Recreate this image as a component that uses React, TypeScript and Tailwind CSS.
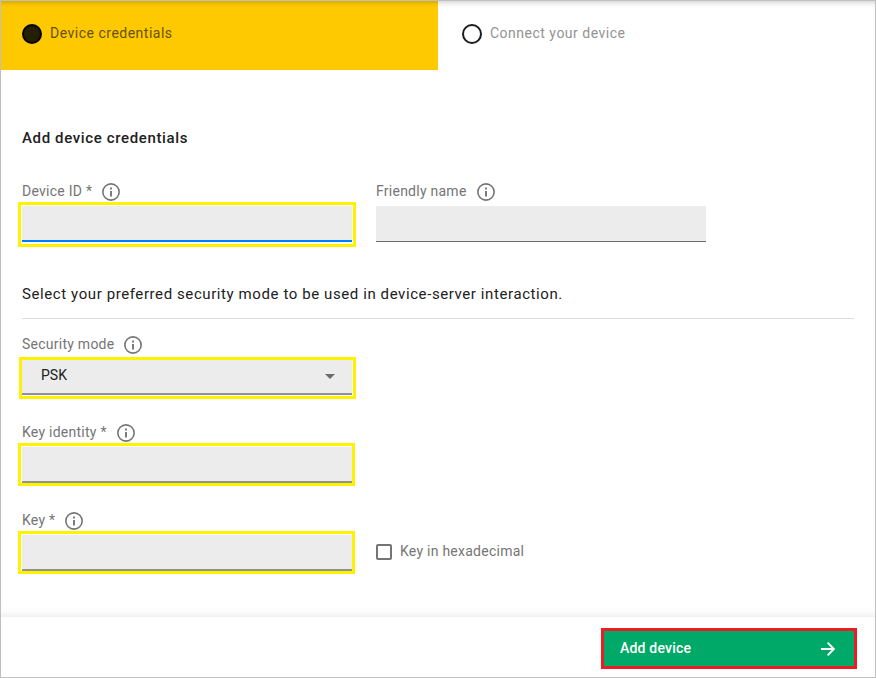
import type { ReactNode } from "react";

function InfoIcon() {
  return (
    <svg width="18" height="18" viewBox="0 0 18 18" className="shrink-0" fill="none">
      <circle cx="9" cy="9" r="8.15" stroke="#757575" strokeWidth="1.6" />
      <path d="M8.1 4.6h1.8v1.8H8.1zM8.1 8h1.8v5.5H8.1z" fill="#6e6e6e" />
    </svg>
  );
}

function Label({ children }: { children: ReactNode }) {
  return (
    <div className="flex h-[18px] items-start gap-[10px] text-sm leading-4 tracking-[0.25px] text-[#757575]">
      <span className="whitespace-nowrap">{children}</span>
      <InfoIcon />
    </div>
  );
}

export default function App() {
  return (
    <div className="flex h-[678px] w-[876px] flex-col overflow-hidden border border-[#c0c0c0] bg-white font-['Roboto',sans-serif]">
      <header className="flex h-[69px] shrink-0 bg-[linear-gradient(to_bottom,rgba(0,0,0,0.14),rgba(0,0,0,0.03)_4px,transparent_7px)] text-sm leading-[18px] tracking-[0.5px]">
        <div className="flex w-[437px] gap-2 bg-[#ffc900] bg-[linear-gradient(to_bottom,rgba(0,0,0,0.14),rgba(0,0,0,0.03)_4px,transparent_7px)] pt-[23px] pl-[21px] text-[#66510a]">
          <span className="size-5 rounded-full border-2 border-black bg-[#261e00]" />
          <span>Device credentials</span>
        </div>
        <div className="flex gap-2 pt-[23px] pl-6 text-[#939393]">
          <span className="size-5 rounded-full border-2 border-[#1c1c1c]" />
          <span>Connect your device</span>
        </div>
      </header>

      <main className="flex min-h-0 flex-1 flex-col pr-[21px] pl-[21px]">
        <h1 className="mt-[58px] h-5 text-[15px] leading-5 font-medium tracking-[0.63px] text-[#212121]">
          Add device credentials
        </h1>

        <div className="mt-[35px] flex h-[64px]">
          <div className="w-[354px]">
            <Label>Device ID *</Label>
            <div className="mt-[1px] -ml-1 h-[45px] w-[338px] border-[3px] border-[#fff200] px-[1px] pt-[1px]">
              <div className="h-9 border-b-2 border-[#007bff] bg-[#ececec]" />
            </div>
          </div>
          <div>
            <Label>Friendly name</Label>
            <div className="mt-[5px] h-9 w-[330px] border-b border-[#6e6e6e] bg-[#ececec]" />
          </div>
        </div>

        <p className="mt-[37px] h-5 text-[15px] leading-5 tracking-[0.59px] text-[#212121]">
          Select your preferred security mode to be used in device-server interaction.
        </p>
        <div className="mt-[14px] h-px shrink-0 bg-[#dedede]" />

        <div className="mt-[17px] h-[63px]">
          <Label>Security mode</Label>
          <div className="mt-[3px] -ml-[3px] h-[42px] w-[337px] border-[3px] border-[#fff200] pr-[1px]">
            <div className="flex h-[35px] items-center justify-between border-b-2 border-[#929292] bg-[#ececec] pr-[17px] pb-1 pl-[19px] text-sm text-[#212121]">
              <span>PSK</span>
              <svg width="10" height="5" viewBox="0 0 10 5" className="mt-[3px]">
                <path d="M0 0h10L5 5z" fill="#6b6b6b" />
              </svg>
            </div>
          </div>
        </div>

        <div className="mt-[25px] h-[62px]">
          <Label>Key identity *</Label>
          <div className="mt-[1px] -ml-1 h-[43px] w-[337px] border-[3px] border-[#fff200] pt-[1px] pl-[1px]">
            <div className="h-9 w-[330px] border-b-2 border-[#929292] bg-[#ececec]" />
          </div>
        </div>

        <div className="mt-[26px] flex h-[62px]">
          <div className="w-[354px]">
            <Label>Key *</Label>
            <div className="mt-[1px] -ml-1 h-[43px] w-[337px] border-[3px] border-[#fff200] pt-[1px] pl-[1px]">
              <div className="h-9 w-[330px] border-b-2 border-[#929292] bg-[#ececec]" />
            </div>
          </div>
          <div className="flex gap-2 pt-8 text-sm leading-[14px] tracking-[0.25px] text-[#757575]">
            <span className="size-4 shrink-0 rounded-[2px] border-2 border-[#757575]" />
            <span className="whitespace-nowrap">Key in hexadecimal</span>
          </div>
        </div>
      </main>

      <div className="h-3 shrink-0 bg-linear-to-b from-white via-[#fcfcfc] to-[#f1f1f1]" />
      <footer className="flex h-[60px] shrink-0 justify-end pt-[11px] pr-[18px]">
        <button className="flex h-[41px] w-[256px] items-center justify-between border-[3px] border-[#ed1c24] bg-[#00a967] pr-[19px] pl-4 text-sm font-medium tracking-[0.2px] text-white">
          <span className="-mt-[2px]">Add device</span>
          <svg width="14" height="14" viewBox="0 0 14 14" fill="none" stroke="white" strokeWidth="1.9">
            <path d="M0 7h13M6.6 0.7L12.9 7l-6.3 6.3" />
          </svg>
        </button>
      </footer>
    </div>
  );
}
